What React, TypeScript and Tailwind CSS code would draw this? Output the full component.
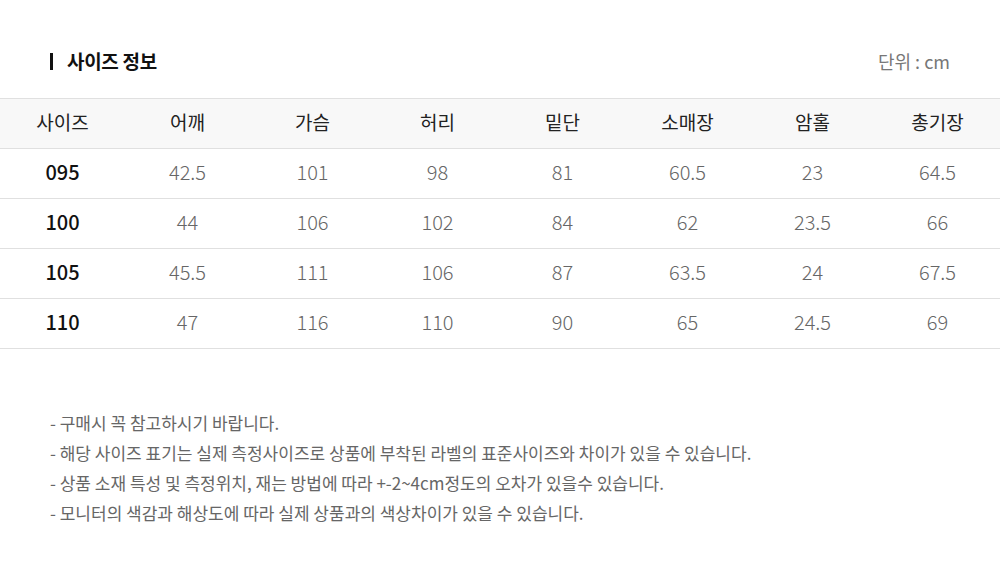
import * as React from 'react';

const headers = ['사이즈', '어깨', '가슴', '허리', '밑단', '소매장', '암홀', '총기장'];

const rows = [
  ['095', '42.5', '101', '98', '81', '60.5', '23', '64.5'],
  ['100', '44', '106', '102', '84', '62', '23.5', '66'],
  ['105', '45.5', '111', '106', '87', '63.5', '24', '67.5'],
  ['110', '47', '116', '110', '90', '65', '24.5', '69']
];

const notes = [
  '- 구매시 꼭 참고하시기 바랍니다.',
  '- 해당 사이즈 표기는 실제 측정사이즈로 상품에 부착된 라벨의 표준사이즈와 차이가 있을 수 있습니다.',
  '- 상품 소재 특성 및 측정위치, 재는 방법에 따라 +-2~4cm정도의 오차가 있을수 있습니다.',
  '- 모니터의 색감과 해상도에 따라 실제 상품과의 색상차이가 있을 수 있습니다.'
];

export default function App(): React.JSX.Element {
  return (
    <div className="w-[1000px] h-[571px] bg-white font-['Noto_Sans_CJK_KR','Noto_Sans',sans-serif] overflow-hidden">
      {/* title */}
      <div className="h-[98px] px-[50px] pt-[48px]">
        <div className="flex items-center justify-between h-[26px]">
          <div className="flex items-center gap-[14px]">
            <span className="block w-[3px] h-[17px] bg-[#111]" />
            <h2 className="text-[19px] font-bold text-[#111] tracking-[-0.3px]">사이즈 정보</h2>
          </div>
          <span className="text-[18px] text-[#777]">단위 : cm</span>
        </div>
      </div>

      {/* table */}
      <div className="border-t border-[#e0e0e0]">
        <div className="grid grid-cols-8 h-[50px] pb-[2px] bg-[#f8f8f8] border-b border-[#e0e0e0] items-center">
          {headers.map((h) => (
            <div key={h} className="text-center text-[19px] text-[#222]">
              {h}
            </div>
          ))}
        </div>
        {rows.map((r) => (
          <div key={r[0]} className="grid grid-cols-8 h-[50px] pb-[3px] border-b border-[#e0e0e0] items-center">
            {r.map((v, i) => (
              <div
                key={i}
                className={
                  i === 0
                    ? 'text-center text-[20px] font-medium text-[#111]'
                    : 'text-center text-[20px] font-light text-[#666]'
                }
              >
                {v}
              </div>
            ))}
          </div>
        ))}
      </div>

      {/* notes */}
      <ul className="pl-[50px] pt-[59px] flex flex-col">
        {notes.map((n) => (
          <li key={n} className="h-[30px] leading-[30px] text-[17px] text-[#666]">
            {n}
          </li>
        ))}
      </ul>
    </div>
  );
}
